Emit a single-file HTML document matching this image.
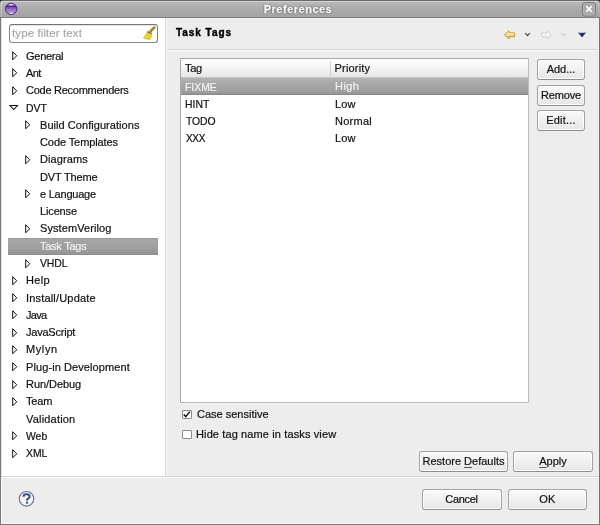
<!DOCTYPE html>
<html><head><meta charset="utf-8">
<style>
*{box-sizing:border-box}
html,body{will-change:transform;margin:0;padding:0;width:600px;height:525px;overflow:hidden;background:#ededed;font-family:"Liberation Sans",sans-serif;font-size:11px;color:#1a1a1a}
.a{position:absolute}
#win{position:absolute;left:0;top:0;width:600px;height:525px;border:1px solid #7a7a7a;border-right-color:#737373;border-top:none;background:#ededed}
#title{position:absolute;left:0;top:0;width:600px;height:18px;background:linear-gradient(#6a6a6a 0px,#6a6a6a 1px,#d2d2d2 1px,#d2d2d2 2px,#b9b9b9 2px,#a9a9a9 10px,#a4a4a4 17px,#7e7e7e 17px);border-radius:4px 4px 0 0}
#ttext{position:absolute;left:-2px;top:3px;width:600px;text-align:center;font-weight:bold;font-size:11px;letter-spacing:0.5px;line-height:12px;color:#f8f8f8;-webkit-text-stroke:0.3px #f8f8f8;text-shadow:0 0 2px #3a3a3a,0 0 1px #444}
#left{position:absolute;left:1px;top:18px;width:165px;height:458px;background:#fff;border-left:1px solid #e4e4e4;border-right:1px solid #d6d6d6}
#filter{position:absolute;left:9px;top:24px;width:149px;height:19px;border:1px solid #868686;border-top-color:#747474;border-radius:3px;background:#fff;box-shadow:inset 0 1px 0 #e4e4e4}
#filter span{position:absolute;left:2px;top:2px;color:#a6a6a6;font-size:11.5px;letter-spacing:0.1px;line-height:13px;-webkit-text-stroke:0.15px #a6a6a6}
.ti{position:absolute;white-space:nowrap;line-height:12px;color:#111;-webkit-text-stroke:0.2px currentColor}
.tri{position:absolute}
#sel{position:absolute;left:8px;top:238px;width:150px;height:17px;background:linear-gradient(#8f8f8f 0px,#a7a7a7 1px,#a0a0a0 9px,#959595 16px,#8d8d8d 16px)}
#right{position:absolute;left:166px;top:18px;width:433px;height:458px;background:#ededed}
#hdr{position:absolute;left:176px;top:27px;font-weight:bold;font-size:10px;color:#000;line-height:11px;letter-spacing:0.95px;-webkit-text-stroke:0.4px #000}
#sep1{position:absolute;left:167px;top:49px;width:430px;height:2px;background:linear-gradient(#d6d6d6 1px,#f7f7f7 1px)}
#table{position:absolute;left:180px;top:58px;width:349px;height:345px;border:1px solid #a8a8a8;border-bottom-color:#b4b4b4;border-right-color:#bcbcbc;border-radius:1px;box-shadow:0 1px 0 #f7f7f7;background:#fff}
#th{position:absolute;left:0;top:0;width:347px;height:19px;background:linear-gradient(#fdfdfd 2px,#f4f4f4 9px,#e5e5e5 18px);border-bottom:1px solid #c9c5c5}
#colsep{position:absolute;left:149px;top:2px;width:1px;height:15px;background:#cfcfcf}
#trsel{position:absolute;left:0;top:19px;width:347px;height:17px;background:linear-gradient(#b2b2b2 0px,#a8a8a8 6px,#9c9c9c 15px,#8b8b8b 16px)}
u{text-underline-offset:1.5px;text-decoration-color:#555;text-decoration-thickness:1px}
.btn{position:absolute;border:1px solid #a2a2a2;border-bottom-color:#8e8e8e;border-radius:3px;background:linear-gradient(#fafafa,#e6e6e6);text-align:center;color:#111;line-height:19px;font-size:11px;-webkit-text-stroke:0.2px currentColor;box-shadow:inset 0 0 0 1px #fdfdfd}
.cb{position:absolute;width:10px;height:10px;border:1px solid #8a8a8a;background:#fff;border-radius:1px}
#sep2{position:absolute;left:1px;top:476px;width:598px;height:2px;background:linear-gradient(#d3d3d3 1px,#f8f8f8 1px)}
</style></head><body>
<div id="win"></div>
<div class="a" style="left:0;top:0;width:600px;height:6px;background:#2a2a2a"></div>
<div id="title"></div>
<svg class="a" style="left:4px;top:2px" width="14" height="14" viewBox="0 0 14 14">
<defs><linearGradient id="pg" x1="0" y1="0" x2="0" y2="1"><stop offset="0" stop-color="#7e50b8"/><stop offset="0.45" stop-color="#8f68c6"/><stop offset="1" stop-color="#b99de2"/></linearGradient>
<clipPath id="pc"><circle cx="7.15" cy="6.85" r="5.7"/></clipPath></defs>
<circle cx="7.15" cy="6.85" r="5.7" fill="url(#pg)"/>
<g clip-path="url(#pc)">
<rect x="0" y="3.9" width="14" height="1.3" fill="#4e2282"/>
<rect x="0" y="5.2" width="14" height="1.2" fill="#7650ac"/>
<ellipse cx="7.2" cy="2.6" rx="2.4" ry="0.9" fill="#ddd0f2"/>
<ellipse cx="7.4" cy="11.3" rx="2" ry="0.8" fill="#f2eaff"/>
</g>
<circle cx="7.15" cy="6.85" r="5.7" fill="none" stroke="#5a2a8e" stroke-width="1"/>
</svg>
<div class="a" style="left:1px;top:1px;width:1px;height:16px;background:linear-gradient(#d8d8d8,#bdbdbd)"></div>
<div class="a" style="left:598px;top:1px;width:1px;height:16px;background:linear-gradient(#c8c8c8,#acacac)"></div>
<div id="ttext">Preferences</div>
<svg class="a" style="left:581px;top:2px" width="16" height="15" viewBox="0 0 16 15">
<rect x="1.5" y="0.5" width="13" height="13.5" rx="2.5" fill="#a9a9a9" stroke="#7a7a7a"/>
<rect x="2.5" y="1.5" width="11" height="11.5" rx="1.8" fill="none" stroke="#b9b9b9" stroke-width="0.8"/>
<path d="M5.2 4.2 L10.8 9.8 M10.8 4.2 L5.2 9.8" stroke="#fbfbfb" stroke-width="1.8"/>
</svg>

<div id="left"></div>
<div class="a" style="left:166px;top:18px;width:1px;height:458px;background:#f7f7f7"></div>
<div id="filter"><span>type filter text</span></div>
<svg class="a" style="left:142px;top:26px" width="14" height="14" viewBox="0 0 14 14">
<path d="M12.2 1.6 L8.6 5.2" stroke="#b07a2a" stroke-width="2.6" stroke-linecap="round"/>
<path d="M5.6 5.2 C7 5.6 9 6.6 10 7.6 L9.2 9.2 C9.6 10.5 9 12.4 8 13.2 C6 13.6 3 13 1.4 11.8 C2.4 10.4 4 9.4 4.8 6.8 Z" fill="#e9d524" stroke="#c2a90e" stroke-width="0.6"/>
<path d="M5.4 5.8 L9.8 7.6" stroke="#7a5aa8" stroke-width="1.2"/>
</svg>
<div id="sel"></div>
<!--TREE-->
<div id="tree">
<div class="ti" style="left:26px;top:50.0px;color:#111;letter-spacing:-0.27px;font-size:11.0px">General</div>
<svg class="tri" style="left:12px;top:51px" width="8" height="10" viewBox="0 0 8 10"><path d="M0.7 0.7 L4.7 4.75 L0.7 8.8 Z" fill="#fff" stroke="#111" stroke-width="1" stroke-linejoin="miter"/></svg>
<div class="ti" style="left:26px;top:67.0px;color:#111;letter-spacing:-0.55px;font-size:11.0px">Ant</div>
<svg class="tri" style="left:12px;top:68px" width="8" height="10" viewBox="0 0 8 10"><path d="M0.7 0.7 L4.7 4.75 L0.7 8.8 Z" fill="#fff" stroke="#111" stroke-width="1" stroke-linejoin="miter"/></svg>
<div class="ti" style="left:26px;top:84.0px;color:#111;letter-spacing:-0.26px;font-size:11.0px">Code Recommenders</div>
<svg class="tri" style="left:12px;top:86px" width="8" height="10" viewBox="0 0 8 10"><path d="M0.7 0.7 L4.7 4.75 L0.7 8.8 Z" fill="#fff" stroke="#111" stroke-width="1" stroke-linejoin="miter"/></svg>
<div class="ti" style="left:26px;top:102.5px;color:#111;letter-spacing:0.00px;font-size:10.4px">DVT</div>
<svg class="tri" style="left:9px;top:105px" width="10" height="7" viewBox="0 0 10 7"><path d="M1 0.5 L8.5 0.5 L4.75 4.5 Z" fill="#fff" stroke="#111" stroke-width="1.05"/></svg>
<div class="ti" style="left:40px;top:119.0px;color:#111;letter-spacing:0.05px;font-size:11.0px">Build Configurations</div>
<svg class="tri" style="left:25px;top:120px" width="8" height="10" viewBox="0 0 8 10"><path d="M0.7 0.7 L4.7 4.75 L0.7 8.8 Z" fill="#fff" stroke="#111" stroke-width="1" stroke-linejoin="miter"/></svg>
<div class="ti" style="left:40px;top:136.0px;color:#111;letter-spacing:-0.09px;font-size:11.0px">Code Templates</div>
<div class="ti" style="left:40px;top:153.0px;color:#111;letter-spacing:0.11px;font-size:11.0px">Diagrams</div>
<svg class="tri" style="left:25px;top:155px" width="8" height="10" viewBox="0 0 8 10"><path d="M0.7 0.7 L4.7 4.75 L0.7 8.8 Z" fill="#fff" stroke="#111" stroke-width="1" stroke-linejoin="miter"/></svg>
<div class="ti" style="left:40px;top:171.0px;color:#111;letter-spacing:-0.16px;font-size:11.0px">DVT Theme</div>
<div class="ti" style="left:40px;top:188.0px;color:#111;letter-spacing:-0.23px;font-size:11.0px">e Language</div>
<svg class="tri" style="left:25px;top:189px" width="8" height="10" viewBox="0 0 8 10"><path d="M0.7 0.7 L4.7 4.75 L0.7 8.8 Z" fill="#fff" stroke="#111" stroke-width="1" stroke-linejoin="miter"/></svg>
<div class="ti" style="left:40px;top:205.0px;color:#111;letter-spacing:-0.14px;font-size:11.0px">License</div>
<div class="ti" style="left:40px;top:222.0px;color:#111;letter-spacing:0.09px;font-size:11.0px">SystemVerilog</div>
<svg class="tri" style="left:25px;top:224px" width="8" height="10" viewBox="0 0 8 10"><path d="M0.7 0.7 L4.7 4.75 L0.7 8.8 Z" fill="#fff" stroke="#111" stroke-width="1" stroke-linejoin="miter"/></svg>
<div class="ti" style="left:40px;top:240.0px;color:#f0f0f0;letter-spacing:-0.26px;font-size:11.0px">Task Tags</div>
<div class="ti" style="left:40px;top:257.5px;color:#111;letter-spacing:-0.10px;font-size:10.4px">VHDL</div>
<svg class="tri" style="left:25px;top:259px" width="8" height="10" viewBox="0 0 8 10"><path d="M0.7 0.7 L4.7 4.75 L0.7 8.8 Z" fill="#fff" stroke="#111" stroke-width="1" stroke-linejoin="miter"/></svg>
<div class="ti" style="left:26px;top:274.0px;color:#111;letter-spacing:0.33px;font-size:11.0px">Help</div>
<svg class="tri" style="left:12px;top:276px" width="8" height="10" viewBox="0 0 8 10"><path d="M0.7 0.7 L4.7 4.75 L0.7 8.8 Z" fill="#fff" stroke="#111" stroke-width="1" stroke-linejoin="miter"/></svg>
<div class="ti" style="left:26px;top:292.0px;color:#111;letter-spacing:0.18px;font-size:11.0px">Install/Update</div>
<svg class="tri" style="left:12px;top:293px" width="8" height="10" viewBox="0 0 8 10"><path d="M0.7 0.7 L4.7 4.75 L0.7 8.8 Z" fill="#fff" stroke="#111" stroke-width="1" stroke-linejoin="miter"/></svg>
<div class="ti" style="left:26px;top:309.0px;color:#111;letter-spacing:-0.67px;font-size:11.0px">Java</div>
<svg class="tri" style="left:12px;top:310px" width="8" height="10" viewBox="0 0 8 10"><path d="M0.7 0.7 L4.7 4.75 L0.7 8.8 Z" fill="#fff" stroke="#111" stroke-width="1" stroke-linejoin="miter"/></svg>
<div class="ti" style="left:26px;top:326.0px;color:#111;letter-spacing:-0.22px;font-size:11.0px">JavaScript</div>
<svg class="tri" style="left:12px;top:328px" width="8" height="10" viewBox="0 0 8 10"><path d="M0.7 0.7 L4.7 4.75 L0.7 8.8 Z" fill="#fff" stroke="#111" stroke-width="1" stroke-linejoin="miter"/></svg>
<div class="ti" style="left:26px;top:343.0px;color:#111;letter-spacing:0.60px;font-size:11.0px">Mylyn</div>
<svg class="tri" style="left:12px;top:345px" width="8" height="10" viewBox="0 0 8 10"><path d="M0.7 0.7 L4.7 4.75 L0.7 8.8 Z" fill="#fff" stroke="#111" stroke-width="1" stroke-linejoin="miter"/></svg>
<div class="ti" style="left:26px;top:361.0px;color:#111;letter-spacing:0.09px;font-size:11.0px">Plug-in Development</div>
<svg class="tri" style="left:12px;top:362px" width="8" height="10" viewBox="0 0 8 10"><path d="M0.7 0.7 L4.7 4.75 L0.7 8.8 Z" fill="#fff" stroke="#111" stroke-width="1" stroke-linejoin="miter"/></svg>
<div class="ti" style="left:26px;top:378.0px;color:#111;letter-spacing:-0.06px;font-size:11.0px">Run/Debug</div>
<svg class="tri" style="left:12px;top:380px" width="8" height="10" viewBox="0 0 8 10"><path d="M0.7 0.7 L4.7 4.75 L0.7 8.8 Z" fill="#fff" stroke="#111" stroke-width="1" stroke-linejoin="miter"/></svg>
<div class="ti" style="left:26px;top:395.0px;color:#111;letter-spacing:-0.13px;font-size:11.0px">Team</div>
<svg class="tri" style="left:12px;top:397px" width="8" height="10" viewBox="0 0 8 10"><path d="M0.7 0.7 L4.7 4.75 L0.7 8.8 Z" fill="#fff" stroke="#111" stroke-width="1" stroke-linejoin="miter"/></svg>
<div class="ti" style="left:26px;top:413.0px;color:#111;letter-spacing:0.19px;font-size:11.0px">Validation</div>
<div class="ti" style="left:26px;top:430.5px;color:#111;letter-spacing:0.00px;font-size:10.4px">Web</div>
<svg class="tri" style="left:12px;top:431px" width="8" height="10" viewBox="0 0 8 10"><path d="M0.7 0.7 L4.7 4.75 L0.7 8.8 Z" fill="#fff" stroke="#111" stroke-width="1" stroke-linejoin="miter"/></svg>
<div class="ti" style="left:26px;top:447.5px;color:#111;letter-spacing:0.00px;font-size:10.4px">XML</div>
<svg class="tri" style="left:12px;top:449px" width="8" height="10" viewBox="0 0 8 10"><path d="M0.7 0.7 L4.7 4.75 L0.7 8.8 Z" fill="#fff" stroke="#111" stroke-width="1" stroke-linejoin="miter"/></svg>
</div>
<!--/TREE-->

<div id="hdr">Task Tags</div>
<div id="sep1"></div>

<div id="table">
 <div id="th"><div id="colsep"></div></div>
 <div id="trsel"></div>
</div>
<div class="ti" style="left:185px;top:62px;letter-spacing:-0.3px">Tag</div>
<div class="ti" style="left:334.5px;top:62px;letter-spacing:0.2px">Priority</div>
<div class="ti" style="left:185px;top:81.5px;color:#f2f2f2;font-size:10.4px;letter-spacing:0px">FIXME</div>
<div class="ti" style="left:335px;top:80px;color:#f2f2f2;letter-spacing:0.45px">High</div>
<div class="ti" style="left:185px;top:99px;font-size:10.4px;letter-spacing:0px">HINT</div>
<div class="ti" style="left:335px;top:98px;letter-spacing:0.1px">Low</div>
<div class="ti" style="left:186px;top:116px;font-size:10.4px;letter-spacing:-0.1px">TODO</div>
<div class="ti" style="left:335px;top:115px;letter-spacing:0.25px">Normal</div>
<div class="ti" style="left:186px;top:133px;font-size:10px;letter-spacing:-0.3px">XXX</div>
<div class="ti" style="left:335px;top:132px;letter-spacing:0.1px">Low</div>
<!--TOOLBAR-->
<svg class="a" style="left:503px;top:29px" width="14" height="12" viewBox="0 0 14 12"><path d="M1.5 5.8 L6 1.8 L6 3.9 L11.6 3.9 L11.6 7.7 L6 7.7 L6 9.8 Z" fill="#f8dc86" stroke="#c8921c" stroke-width="1" stroke-linejoin="round"/><path d="M3 5.8 L5.5 3.6 L5.5 4.6 L11.5 4.6" fill="none" stroke="#fff5cf" stroke-width="0.8"/></svg>
<svg class="a" style="left:524px;top:32px" width="7" height="5" viewBox="0 0 7 5"><path d="M1.2 1.2 L3.5 3.6 L5.8 1.2" fill="none" stroke="#444" stroke-width="1.2"/></svg>
<svg class="a" style="left:539px;top:29px" width="14" height="12" viewBox="0 0 14 12"><path d="M12.5 5.8 L8 1.8 L8 3.9 L2.4 3.9 L2.4 7.7 L8 7.7 L8 9.8 Z" fill="#f4f4f4" stroke="#d0d0d0" stroke-width="1" stroke-linejoin="round"/></svg>
<svg class="a" style="left:560px;top:32px" width="7" height="5" viewBox="0 0 7 5"><path d="M1.5 1.3 L3.5 3.4 L5.5 1.3" fill="none" stroke="#b8b8b8" stroke-width="1"/></svg>
<svg class="a" style="left:577px;top:31px" width="10" height="7" viewBox="0 0 10 7"><defs><linearGradient id="bt" x1="0" y1="0" x2="0.3" y2="1"><stop offset="0" stop-color="#3a4790"/><stop offset="1" stop-color="#10164a"/></linearGradient></defs><path d="M0.8 1.4 Q5 2.2 9.2 1.4 L5 6.2 Z" fill="url(#bt)"/></svg>
<!--/TOOLBAR-->
<div class="btn" style="left:537px;top:59px;width:48px;height:21px">Add...</div>
<div class="btn" style="left:537px;top:85px;width:48px;height:21px;letter-spacing:-0.14px">Remove</div>
<div class="btn" style="left:537px;top:110px;width:48px;height:21px;letter-spacing:0.2px">Edit...</div>

<div class="cb" style="left:182px;top:410px;height:9px"></div>
<svg class="a" style="left:182px;top:410px" width="10" height="9" viewBox="0 0 10 9"><path d="M1.8 4.4 L3.8 6.6 L7.8 1.6" fill="none" stroke="#111" stroke-width="1.5"/></svg>
<div class="cb" style="left:182px;top:430px;height:9px"></div>
<div class="ti" style="left:197px;top:408px">Case sensitive</div>
<div class="ti" style="left:196px;top:428px;letter-spacing:0.12px">Hide tag name in tasks view</div>

<div class="btn" style="left:419px;top:451px;width:89px;height:21px">Restore <u>D</u>efaults</div>
<div class="btn" style="left:513px;top:451px;width:80px;height:21px"><u>A</u>pply</div>
<div id="sep2"></div>
<div class="a" style="left:1px;top:478px;width:1px;height:46px;background:#fbfbfb"></div>
<div class="a" style="left:1px;top:523px;width:597px;height:1px;background:#f7f7f7"></div>
<div class="btn" style="left:422px;top:489px;width:80px;height:21px;letter-spacing:-0.28px;text-indent:-1px">Cancel</div>
<div class="btn" style="left:508px;top:489px;width:79px;height:21px;letter-spacing:0.3px">OK</div>

<svg class="a" style="left:18px;top:490px" width="17" height="17" viewBox="0 0 17 17"><circle cx="8.5" cy="8.8" r="7.3" fill="#f3f3f3" stroke="#5c6f98" stroke-width="1.1"/><path d="M5.5 6.7 C5.5 5 6.8 4.3 8.5 4.3 C10.3 4.3 11.6 5.2 11.6 6.6 C11.6 8.2 9.6 8.5 9.1 9.7 L9 10.6" fill="none" stroke="#3b4e7c" stroke-width="2"/><circle cx="9" cy="12.7" r="1.15" fill="#3b4e7c"/></svg>
</body></html>
